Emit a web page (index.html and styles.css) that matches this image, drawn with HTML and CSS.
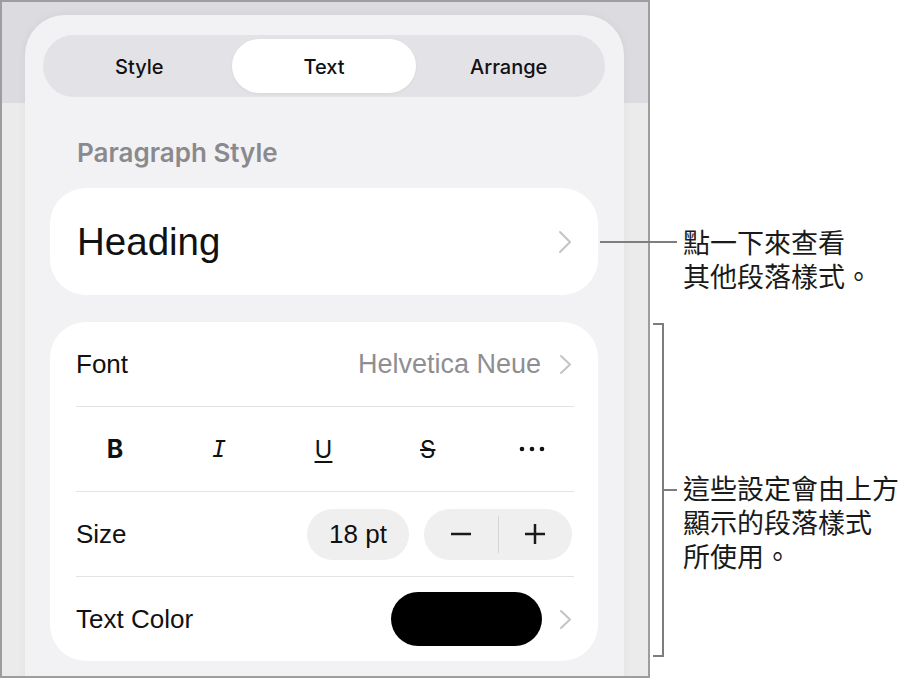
FILE: index.html
```html
<!DOCTYPE html>
<html>
<head>
  <title>Paragraph Style</title>
  <link rel="stylesheet" href="styles.css">
</head>
<body>
  <div id="page">
    <div id="shot">
      <div class="panel">
        <div class="tabs">
          <div class="tab">Style</div>
          <div class="tab active">Text</div>
          <div class="tab">Arrange</div>
        </div>

        <div class="section-title">Paragraph Style</div>

        <div class="card heading-card">
          <span class="heading-name">Heading</span>
          <svg class="chevron" width="14" height="24" viewBox="0 0 14 24"><polyline points="2,2 12,12 2,22" /></svg>
        </div>

        <div class="card">
          <div class="row">
            <span class="label">Font</span>
            <span class="value">
              <span class="font-name">Helvetica Neue</span>
              <svg class="chevron" width="13" height="21" viewBox="0 0 13 21"><polyline points="2,2 11,10.5 2,19" /></svg>
            </span>
          </div>

          <div class="row format-row">
            <span class="fmt bold">B</span>
            <span class="fmt italic">I</span>
            <span class="fmt under">U</span>
            <span class="fmt strike">S</span>
            <svg class="fmt" width="30" height="6" viewBox="0 0 30 6"><circle cx="5" cy="3" r="2.3" /><circle cx="15" cy="3" r="2.3" /><circle cx="25" cy="3" r="2.3" /></svg>
          </div>

          <div class="row">
            <span class="label">Size</span>
            <span class="value">
              <span class="size-pill">18 pt</span>
              <span class="stepper">
                <span class="step">
                  <svg width="22" height="22" viewBox="0 0 22 22"><line x1="1" y1="11" x2="21" y2="11" /></svg>
                </span>
                <span class="step-divider"></span>
                <span class="step">
                  <svg width="22" height="22" viewBox="0 0 22 22"><line x1="1" y1="11" x2="21" y2="11" /><line x1="11" y1="1" x2="11" y2="21" /></svg>
                </span>
              </span>
            </span>
          </div>

          <div class="row">
            <span class="label">Text Color</span>
            <span class="value">
              <span class="swatch"></span>
              <svg class="chevron" width="13" height="21" viewBox="0 0 13 21"><polyline points="2,2 11,10.5 2,19" /></svg>
            </span>
          </div>
        </div>
      </div>
    </div>

    <div id="notes">
      <div class="callout">
        <div class="lead"></div>
        <p>點一下來查看<br>其他段落樣式。</p>
      </div>
      <div class="bracket-note">
        <div class="bracket"></div>
        <div class="tick"></div>
        <p>這些設定會由上方<br>顯示的段落樣式<br>所使用。</p>
      </div>
    </div>
  </div>
</body>
</html>
```

FILE: styles.css
```css
body {
  margin: 0;
  background: #fff;
  font-family: "Inter", "Noto Sans", sans-serif;
  color: #111;
}

#page {
  display: flex;
  width: 921px;
  height: 678px;
}

#shot {
  box-sizing: border-box;
  width: 650px;
  height: 678px;
  flex-shrink: 0;
  border: 2px solid #9d9d9d;
  background: linear-gradient(to bottom, #dcdce0 0, #dcdce0 101px, #ebebec 101px);
  overflow: hidden;
}

.panel {
  box-sizing: border-box;
  width: 599px;
  height: 700px;
  margin: 13px 0 0 23px;
  padding: 20px 19px 0 18px;
  background: #f2f2f4;
  border-radius: 40px 40px 0 0;
  box-shadow: 0 0 10px rgba(0, 0, 0, 0.05);
}

/* segmented control */
.tabs {
  display: grid;
  grid-template-columns: 1fr 1fr 1fr;
  height: 62px;
  box-sizing: border-box;
  padding: 4px;
  background: #e3e3e7;
  border-radius: 31px;
}

.tab {
  padding-top: 2px;
  font-size: 20px;
  font-weight: 500;
  line-height: 52px;
  text-align: center;
  border-radius: 28px;
}

.tab.active {
  background: #fff;
  box-shadow: 0 1px 3px rgba(0, 0, 0, 0.06);
}

.section-title {
  margin: 41px 0 0 34px;
  font-size: 26px;
  font-weight: 600;
  line-height: 30px;
  color: #8a8a8e;
}

.card {
  margin: 0 7px;
  background: #fff;
  border-radius: 36px;
  font-family: "Liberation Sans", Arial, sans-serif;
}

.heading-card {
  display: flex;
  align-items: center;
  justify-content: space-between;
  height: 107px;
  margin-top: 20px;
  padding: 0 26px 0 27px;
}

.heading-name {
  font-size: 38.5px;
}

.heading-card + .card {
  margin-top: 27px;
}

.chevron polyline {
  fill: none;
  stroke: #c4c4c7;
  stroke-width: 2;
  stroke-linecap: round;
  stroke-linejoin: round;
}

/* rows in the settings card */
.row {
  display: flex;
  align-items: center;
  justify-content: space-between;
  height: 84px;
  margin: 0 24px 0 26px;
  font-size: 26px;
}

.row + .row {
  border-top: 1px solid #e3e3e5;
}

.value {
  display: flex;
  align-items: center;
  gap: 18px;
  padding-right: 2px;
  color: #8e8e93;
}

.font-name {
  font-size: 27px;
}

.format-row {
  padding: 0 27px 0 24px;
}

.fmt {
  width: 30px;
  text-align: center;
  font-family: "Inter", sans-serif;
  font-size: 24px;
  color: #111;
}

.fmt.bold {
  font-weight: 700;
  font-size: 25px;
}

.fmt.italic {
  font-family: "DejaVu Sans Mono", monospace;
  font-style: italic;
  font-size: 23px;
}

.fmt.under {
  text-decoration: underline;
  text-decoration-thickness: 2px;
  text-underline-offset: 3px;
}

.fmt.strike {
  text-decoration: line-through;
  text-decoration-thickness: 2px;
}

svg.fmt circle {
  fill: #111;
}

.size-pill {
  width: 102px;
  height: 51px;
  line-height: 51px;
  text-align: center;
  background: #efeff0;
  border-radius: 26px;
  color: #111;
}

.stepper {
  display: flex;
  align-items: center;
  width: 148px;
  height: 51px;
  margin-left: -3px;
  background: #efeff0;
  border-radius: 26px;
}

.step {
  flex: 1;
  display: flex;
  justify-content: center;
}

.step line {
  stroke: #1a1a1a;
  stroke-width: 2.5;
}

.step-divider {
  width: 1px;
  height: 37px;
  background: #d6d6d8;
}

.swatch {
  width: 151px;
  height: 54px;
  background: #000;
  border-radius: 27px;
  margin-right: -1px;
}

/* annotations */
#notes {
  flex: 1;
  padding-top: 225px;
  font-family: "Noto Sans CJK TC", sans-serif;
  font-size: 27px;
  line-height: 34px;
  color: #1a1a1a;
}

#notes p {
  margin: 0 0 0 6px;
  white-space: nowrap;
}

.callout {
  display: flex;
  align-items: flex-start;
}

.lead {
  width: 77px;
  height: 2px;
  margin: 16px 0 0 -50px;
  background: #7d7d7d;
  flex-shrink: 0;
}

.bracket-note {
  display: flex;
  align-items: flex-start;
  margin-top: 30px;
}

.bracket {
  width: 9px;
  height: 330px;
  margin-left: 3px;
  border: 2px solid #7d7d7d;
  border-left: none;
  flex-shrink: 0;
}

.tick {
  width: 13px;
  height: 2px;
  margin-top: 166px;
  background: #7d7d7d;
  flex-shrink: 0;
}

.bracket-note p {
  margin-top: 148px !important;
}
```
